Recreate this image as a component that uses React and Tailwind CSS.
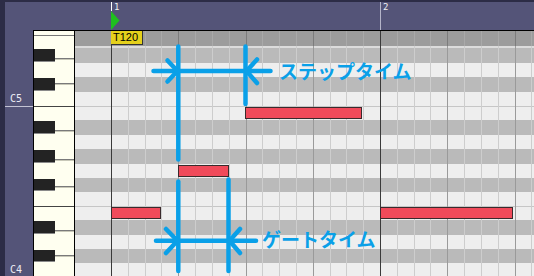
import React from "react";

const ROWS = [
  { h: "h-[15px]", dark: true, name: "D#5", keyPad: "h-[10px]" },
  { h: "h-[14px]", dark: false, name: "D5" },
  { h: "h-[15px]", dark: true, name: "C#5", keyPad: "h-[6px]" },
  { h: "h-[14px]", dark: false, name: "C5" },
  { h: "h-[14px]", dark: false, name: "B4", line: true },
  { h: "h-[15px]", dark: true, name: "A#4", keyPad: "h-[10px]" },
  { h: "h-[14px]", dark: false, name: "A4" },
  { h: "h-[15px]", dark: true, name: "G#4", keyPad: "h-[10px]" },
  { h: "h-[14px]", dark: false, name: "G4" },
  { h: "h-[14px]", dark: true, name: "F#4", keyPad: "h-[8px]" },
  { h: "h-[14px]", dark: false, name: "F4" },
  { h: "h-[14px]", dark: false, name: "E4", line: true },
  { h: "h-[15px]", dark: true, name: "D#4", keyPad: "h-[10px]" },
  { h: "h-[14px]", dark: false, name: "D4" },
  { h: "h-[14px]", dark: true, name: "C#4", keyPad: "h-[6px]" },
  { h: "h-[14px]", dark: false, name: "C4" },
];

const COLS = Array.from({ length: 26 }, (_, k) => k);

function colClass(k, tempo) {
  if (k % 16 === 0) return "border-[#3a3a3a]";
  if (k % 4 === 0) return tempo ? "border-[#7c7c7c]" : "border-[#9a9a9a]";
  return tempo ? "border-[#a9a9a9]" : "border-[#cdcdcd]";
}

function Columns({ tempo }) {
  return (
    <div className="flex h-full">
      <div className="w-[36px] shrink-0" />
      {COLS.map((k) => (
        <div
          key={k}
          className={`w-[16.8125px] shrink-0 h-full border-l ${colClass(k, tempo)}`}
        />
      ))}
    </div>
  );
}

const NOTES = [
  "left-[170px] top-[76px] w-[117px]",
  "left-[103px] top-[134px] w-[51px]",
  "left-[36px] top-[176px] w-[50px]",
  "left-[305px] top-[176px] w-[133px]",
];

function Keyboard() {
  return (
    <div className="w-[42px] shrink-0 border-x border-black bg-[#fffff0] flex flex-col overflow-hidden">
      <div className="h-[4px] shrink-0" />
      <div className="h-[13px] shrink-0 border-t border-[#777]" />
      {ROWS.map((r) =>
        r.dark ? (
          <div key={r.name} className={`${r.h} shrink-0 flex`}>
            <div className="w-[22px] -ml-px mt-[1px] mb-[1px] bg-[#232323] border-b border-[#8a8a8a]" />
            <div className="flex-1 flex flex-col">
              <div className={r.keyPad} />
              <div className="h-px bg-[#7a7a7a]" />
              <div className="h-px bg-[#c8c8b8]" />
            </div>
          </div>
        ) : (
          <div
            key={r.name}
            className={`${r.h} shrink-0 ${r.line ? "border-t border-[#444]" : ""}`}
          />
        )
      )}
    </div>
  );
}

export default function App() {
  return (
    <div className="relative w-[534px] h-[276px] overflow-hidden bg-[#2c2c46] pl-[5px] pt-[2px] font-['DejaVu_Sans_Mono',monospace]">
      <div className="flex flex-col h-full bg-[#545478]">
        {/* header */}
        <div className="flex h-[29px] shrink-0">
          <div className="w-[28px] shrink-0" />
          <div className="relative flex-1 border-b border-black">
            <div className="absolute left-[78px] top-0 h-[9px] w-px bg-white" />
            <svg className="absolute left-[78px] top-[9px]" width="9" height="19" viewBox="0 0 9 19">
              <polygon points="0,0 8.5,9.5 0,19" fill="#1fc01f" />
            </svg>
            <span className="absolute left-[81px] top-[1px] text-[9px] leading-none text-[#f0f0f0]">1</span>
            <div className="absolute left-[347px] top-0 h-full w-px bg-[#b4b4c8]" />
            <span className="absolute left-[350px] top-[1px] text-[9px] leading-none text-[#f0f0f0]">2</span>
          </div>
        </div>
        {/* body */}
        <div className="flex flex-1 min-h-0">
          <div className="w-[28px] shrink-0 flex flex-col text-[10px] text-[#ececf4]">
            <div className="h-[61px] shrink-0" />
            <div className="h-[14px] shrink-0 leading-[14px] pl-[5px]">C5</div>
            <div className="h-px shrink-0 bg-[#c4c4d4]" />
            <div className="h-[156px] shrink-0" />
            <div className="h-[14px] shrink-0 leading-[14px] pl-[5px]">C4</div>
          </div>
          <Keyboard />
          <div className="relative flex-1 flex flex-col overflow-hidden">
            <div className="relative h-[15px] shrink-0 bg-[#9c9c9c]">
              <Columns tempo />
              <div className="absolute left-[36px] top-0 w-[32px] h-[14px] bg-[#e4d01c] border-r border-b border-[#333] font-['Liberation_Sans',sans-serif] text-[11px] leading-[13px] text-black pl-[2px]">
                T120
              </div>
            </div>
            <div className="h-[2px] shrink-0 bg-[#dcdcdc]" />
            {ROWS.map((r) => (
              <div
                key={r.name}
                className={`${r.h} shrink-0 ${r.dark ? "bg-[#bababa]" : "bg-[#eeeeee]"} ${r.line ? "border-t border-[#c6c6c6]" : ""}`}
              />
            ))}
            <div className="absolute left-0 right-0 top-[15px] bottom-0 pointer-events-none">
              <Columns />
            </div>
            {NOTES.map((n, i) => (
              <div
                key={i}
                className={`absolute ${n} h-[12px] bg-[#f04a5a] border border-[#3a2a2c]`}
              />
            ))}
          </div>
        </div>
      </div>

      {/* annotations */}
      <svg
        className="absolute left-0 top-0 pointer-events-none"
        width="534"
        height="276"
        viewBox="0 0 534 276"
      >
        <g stroke="#0aa0e8" strokeWidth="4.5" strokeLinecap="round" strokeLinejoin="round" fill="none">
          <line x1="178.3" y1="46.5" x2="178.3" y2="159.5" />
          <line x1="245.5" y1="46.5" x2="245.5" y2="104" />
          <line x1="153.5" y1="71" x2="270.5" y2="71" />
          <polyline points="167.5,60.5 177.5,71 167.5,81.5" />
          <polyline points="257,59.5 246.5,71 257,83" />
          <line x1="178.3" y1="181.5" x2="178.3" y2="271" />
          <line x1="228.5" y1="179.5" x2="228.5" y2="271" />
          <line x1="156" y1="240.8" x2="256" y2="240.8" />
          <polyline points="166,229 177.5,240.8 166,253" />
          <polyline points="240,229 229.5,240.8 240,253" />
        </g>
      </svg>
      <span className="absolute left-[279px] top-[61px] text-[19px] leading-none font-bold text-[#0aa0e8] font-['Noto_Sans_CJK_JP',sans-serif] whitespace-nowrap">
        ステップタイム
      </span>
      <span className="absolute left-[262px] top-[229px] text-[19px] leading-none font-bold text-[#0aa0e8] font-['Noto_Sans_CJK_JP',sans-serif] whitespace-nowrap">
        ゲートタイム
      </span>
    </div>
  );
}
